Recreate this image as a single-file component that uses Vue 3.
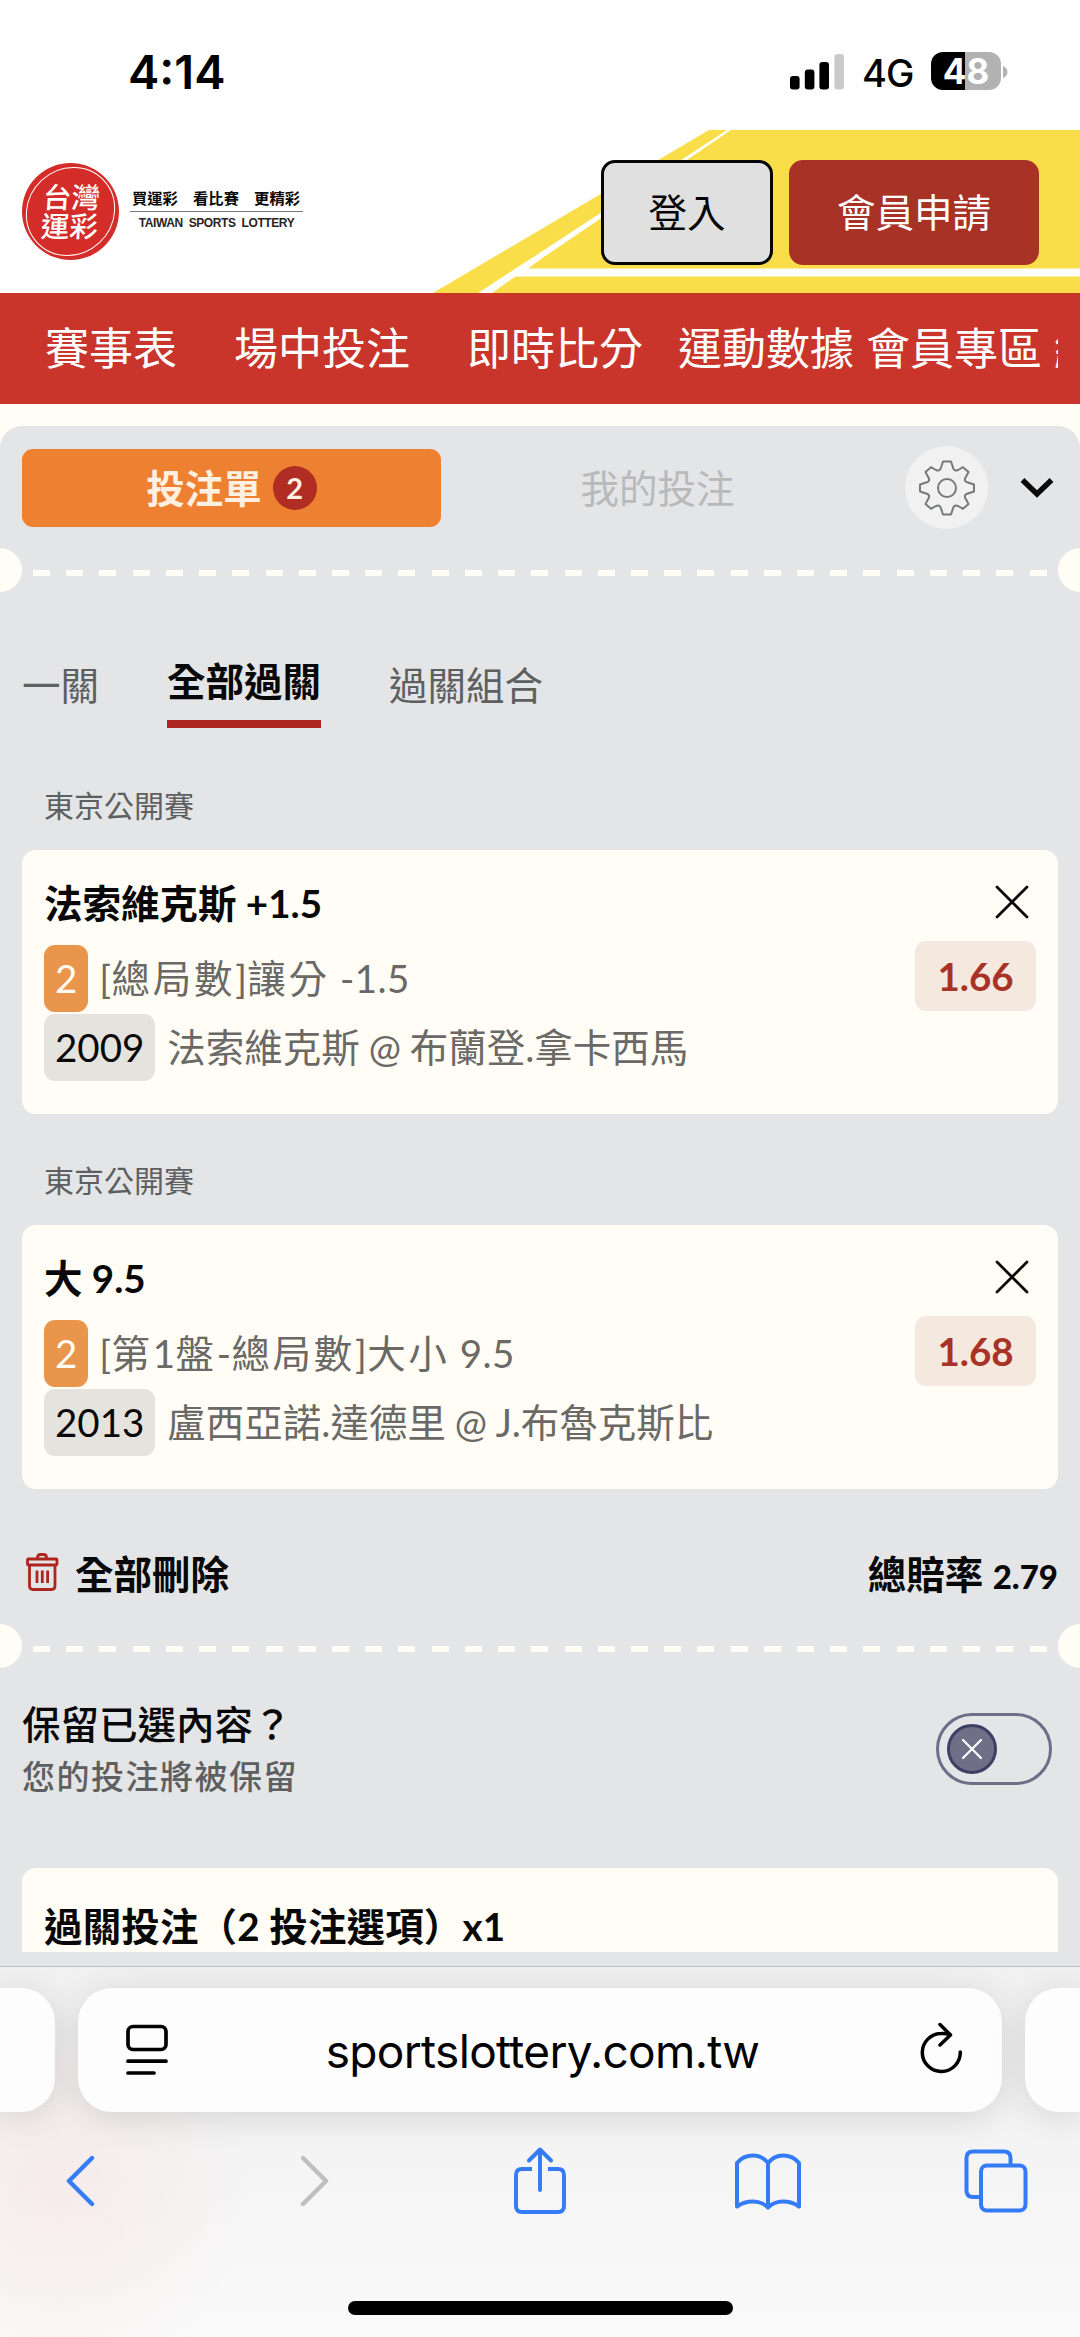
<script setup>
const navItems = [
  { label: '賽事表', gap: 57 },
  { label: '場中投注', gap: 57 },
  { label: '即時比分', gap: 35 },
  { label: '運動數據', gap: 12 },
  { label: '會員專區', gap: 12 },
  { label: '經銷商專區', gap: 0 },
]

const bets = [
  {
    league: '東京公開賽',
    pick: '法索維克斯 +1.5',
    count: '2',
    market: '[總局數]讓分 -1.5',
    code: '2009',
    match: '法索維克斯 @ 布蘭登.拿卡西馬',
    odds: '1.66',
  },
  {
    league: '東京公開賽',
    pick: '大 9.5',
    count: '2',
    market: '[第1盤-總局數]大小 9.5',
    code: '2013',
    match: '盧西亞諾.達德里 @ J.布魯克斯比',
    odds: '1.68',
  },
]

// Splits a label into runs of Han characters and runs of anything else.
const runs = (text) => text.split(/([\u4e00-\u9fff]+)/).filter(Boolean)
const isHan = (text) => /^[\u4e00-\u9fff]/.test(text)

const dashes = 31
</script>

<template>
  <div class="screen">
    <div class="status">
      <span class="time">4:14</span>
      <div class="status-right">
        <svg class="signal" width="54" height="36" viewBox="0 0 54 36">
          <rect x="0" y="22" width="9.6" height="13.5" rx="3" />
          <rect x="14.8" y="15.5" width="9.6" height="20" rx="3" />
          <rect x="29.4" y="8" width="9.6" height="27.5" rx="3" />
          <rect x="44.4" y="0" width="9.6" height="35.5" rx="3" fill="#cacaca" />
        </svg>
        <span class="net">4G</span>
        <div class="battery">48</div>
        <svg class="nub" width="5" height="12" viewBox="0 0 5 12"><path d="M0 0C6 2 6 10 0 12Z" fill="#b2b2b2" /></svg>
      </div>
    </div>

    <header class="banner">
      <svg class="banner-art" width="1080" height="163" viewBox="0 0 1080 163">
        <g fill="#f9de4a">
          <path d="M433 163L709 0H727L541 122L478 163Z" />
          <path d="M731 0H1080V138.500H528L541 129Z" />
          <path d="M515.500 146.500H1080V163H492Z" />
        </g>
      </svg>
      <div class="brand">
        <div class="seal">
          <div class="seal-ring"><span>台灣</span><span>運彩</span></div>
        </div>
        <div class="slogan">
          <div class="slogan-zh"><span>買運彩</span><span>看比賽</span><span>更精彩</span></div>
          <div class="slogan-en">TAIWAN SPORTS LOTTERY</div>
        </div>
      </div>
      <button class="btn login">登入</button>
      <button class="btn join">會員申請</button>
    </header>

    <nav class="nav">
      <span v-for="n in navItems" :key="n.label" :style="{ marginRight: n.gap + 'px' }">{{ n.label }}</span>
    </nav>

    <main class="panel">
      <div class="top-tabs">
        <div class="slip-tab"><span class="lift">投注單</span><span class="badge">2</span></div>
        <div class="mine-tab">我的投注</div>
        <div class="gear">
          <svg width="58" height="58" viewBox="-29 -29 58 58" fill="none" stroke="#77797a" stroke-width="2" stroke-linejoin="round">
            <circle r="9" />
            <path d="M-4 -26.500H4L6.500 -19Q8 -16.500 11 -18L16 -20.800L21.500 -16L18.300 -10Q17 -7 19.500 -6L27 -3.500V3.500L19.500 6Q17 7 18.300 10L21.500 16L16 20.800L11 18Q8 16.500 6.500 19L4 26.500H-4L-6.500 19Q-8 16.500 -11 18L-16 20.800L-21.500 16L-18.300 10Q-17 7 -19.500 6L-27 3.500V-3.500L-19.500 -6Q-17 -7 -18.300 -10L-21.500 -16L-16 -20.800L-11 -18Q-8 -16.500 -6.500 -19Z" />
          </svg>
        </div>
        <svg class="chev" width="34" height="22" viewBox="0 0 34 22" fill="none" stroke="#0a0a0a" stroke-width="5.500"><path d="M2.500 3L17 17L31.500 3" /></svg>
      </div>

      <div class="tear">
        <i v-for="d in dashes" :key="d" class="dash"></i>
      </div>

      <div class="modes">
        <span class="mode">一關</span>
        <span class="mode active">全部過關</span>
        <span class="mode">過關組合</span>
      </div>

      <section v-for="b in bets" :key="b.code" class="bet">
        <div class="league">{{ b.league }}</div>
        <div class="card">
          <div class="pick-row">
            <span class="pick">{{ b.pick }}</span>
            <svg width="34" height="34" viewBox="0 0 34 34" fill="none" stroke="#0a0a0a" stroke-width="2.800" stroke-linecap="round"><path d="M2 2L32 32M32 2L2 32" /></svg>
          </div>
          <div class="row">
            <span class="chip count">{{ b.count }}</span>
            <span class="market"><span v-for="(r, i) in runs(b.market)" :key="i" :class="{ han: isHan(r) }">{{ r }}</span></span>
            <span class="odds">{{ b.odds }}</span>
          </div>
          <div class="row second">
            <span class="chip code">{{ b.code }}</span>
            <span class="match">{{ b.match }}</span>
          </div>
        </div>
      </section>

      <div class="totals">
        <svg width="33" height="38" viewBox="0 0 33 38" fill="none" stroke="#ae2620" stroke-width="2.800" stroke-linejoin="round">
          <path d="M11.500 6V4.500Q11.500 1.500 14.500 1.500H17.500Q20.500 1.500 20.500 4.500V6" />
          <rect x="1.500" y="6" width="29.500" height="6" rx="1" />
          <path d="M3.500 12V33Q3.500 36.500 7 36.500H25.500Q29 36.500 29 33V12" />
          <path d="M11 17.500V30M16.300 17.500V30M21.600 17.500V30" />
        </svg>
        <span class="clear">全部刪除</span>
        <span class="total">總賠率 <b>2.79</b></span>
      </div>

      <div class="tear second-tear">
        <i v-for="d in dashes" :key="d" class="dash"></i>
      </div>

      <div class="keep">
        <div>
          <div class="keep-title">保留已選內容？</div>
          <div class="keep-sub">您的投注將被保留</div>
        </div>
        <div class="toggle">
          <div class="knob">
            <svg width="22" height="22" viewBox="0 0 22 22" fill="none" stroke="#fff" stroke-width="2.200" stroke-linecap="round"><path d="M2 2L20 20M20 2L2 20" /></svg>
          </div>
        </div>
      </div>

      <div class="parlay">過關投注（2 投注選項）x1</div>
    </main>

    <footer class="browser">
      <div class="pills">
        <div class="pill side left"></div>
        <div class="pill url">
          <svg class="page-icon" width="43" height="52" viewBox="0 0 43 52" fill="none" stroke="#000" stroke-width="3.700" stroke-linecap="round">
            <rect x="2" y="2.500" width="38" height="23" rx="5" />
            <path d="M2 37.200H40M2 49H28" />
          </svg>
          <span class="host">sportslottery.com.tw</span>
          <svg class="reload" width="44" height="54" viewBox="0 0 44 54" fill="none" stroke="#000" stroke-width="3.500" stroke-linecap="round" stroke-linejoin="round">
            <path d="M40.300 31A19 19 0 1 1 21.300 12.500Q26 12 30 14M20 3.500L30.500 14L20 24" />
          </svg>
        </div>
        <div class="pill side right"></div>
      </div>
      <div class="tools">
        <svg width="30" height="54" viewBox="0 0 30 54" fill="none" stroke="#347bf6" stroke-width="4.400" stroke-linecap="round" stroke-linejoin="round"><path d="M27 4L4 27L27 50" /></svg>
        <svg class="forward" width="30" height="54" viewBox="0 0 30 54" fill="none" stroke="#bfbfbf" stroke-width="4.400" stroke-linecap="round" stroke-linejoin="round"><path d="M3 4L26 27L3 50" /></svg>
        <svg class="share" width="54" height="68" viewBox="0 0 54 68" fill="none" stroke="#347bf6" stroke-width="3.900" stroke-linejoin="round">
          <path d="M19 22H9Q3 22 3 28V59Q3 65 9 65H45Q51 65 51 59V28Q51 22 45 22H35" />
          <path stroke-linecap="round" d="M27 43V3M16 13.500L27 2.500L38 13.500" />
        </svg>
        <svg class="book" width="68" height="60" viewBox="0 0 68 60" fill="none" stroke="#347bf6" stroke-width="4" stroke-linejoin="round">
          <path d="M34 12Q28 4.500 19 4.500Q9 4.500 3 12V55.500Q10 50.500 19 50.500Q28 50.500 34 56.500Q40 50.500 49 50.500Q58 50.500 65 55.500V12Q59 4.500 49 4.500Q40 4.500 34 12V56" />
        </svg>
        <svg class="tabs" width="64" height="64" viewBox="0 0 64 64" fill="none" stroke="#347bf6" stroke-width="4">
          <rect x="17" y="16.500" width="44.500" height="45" rx="6" />
          <path d="M17 48H9Q2.500 48 2.500 41.500V9Q2.500 2.500 9 2.500H40Q46.500 2.500 46.500 9V16" />
        </svg>
      </div>
      <div class="home"></div>
    </footer>
  </div>
</template>

<style>
body {
  margin: 0;
}
</style>

<style scoped>
* {
  box-sizing: border-box;
}
.screen {
  width: 1080px;
  height: 2337px;
  overflow: hidden;
  background: #fffdf5;
  color: #080808;
  font-family: Lato, 'Noto Sans CJK TC', sans-serif;
  font-size: 38.500px;
  display: flex;
  flex-direction: column;
  white-space: nowrap;
}
svg {
  display: block;
  flex: none;
}

/* status bar */
.status {
  height: 130px;
  flex: none;
  background: #fff;
  display: flex;
  justify-content: space-between;
  padding: 0 72px 0 128px;
  font-family: Inter, sans-serif;
  color: #000;
}
.time {
  margin-top: 42px;
  line-height: 60px;
  font-size: 47px;
  font-weight: 600;
}
.status-right {
  display: flex;
}
.signal {
  margin-top: 54px;
}
.net {
  width: 50px;
  margin: 53px 0 0 18px;
  line-height: 40px;
  font-size: 38px;
  font-weight: 500;
  letter-spacing: -1px;
}
.battery {
  width: 70px;
  height: 38px;
  margin: 52px 2px 0 19px;
  border-radius: 12px;
  background: linear-gradient(90deg, #000 34px, #b2b2b2 34px);
  color: #fff;
  font-size: 35px;
  font-weight: 700;
  line-height: 38px;
  text-align: center;
}
.nub {
  margin-top: 66px;
}

/* banner */
.banner {
  position: relative;
  height: 163px;
  flex: none;
  background: #fff;
  display: flex;
  align-items: flex-start;
  padding: 30px 41px 0 22px;
}
.banner-art {
  position: absolute;
  inset: 0;
}
.brand {
  position: relative;
  display: flex;
  flex: 1;
  padding-top: 3px;
}
.seal {
  width: 97px;
  height: 97px;
  border-radius: 50%;
  background: #d42c28;
  padding: 4px;
}
.seal-ring {
  height: 89px;
  border: 1.500px solid #fff;
  border-radius: 50%;
  color: #fff;
  font-size: 28.500px;
  font-weight: 500;
  line-height: 29px;
  display: flex;
  flex-direction: column;
  align-items: center;
  justify-content: center;
  transform: skewX(-4deg);
}
.slogan {
  width: 173px;
  margin: 26px 0 0 11px;
}
.slogan-zh {
  display: flex;
  justify-content: space-between;
  height: 23px;
  padding: 0 3px 0 2px;
  border-bottom: 1.500px solid #777;
  font-size: 15.300px;
  font-weight: 700;
  line-height: 18px;
}
.slogan-en {
  font-family: 'Liberation Sans', sans-serif;
  font-weight: 700;
  font-size: 12px;
  line-height: 23px;
  text-align: center;
  color: #2b2323;
  word-spacing: 3px;
  letter-spacing: -0.400px;
}
.btn {
  position: relative;
  height: 105px;
  margin: 0;
  padding: 0;
  border: 3px solid #a83226;
  border-radius: 14px;
  font: inherit;
  line-height: 95px;
}
.login {
  width: 172px;
  border-color: #050505;
  background: #e0e0e0;
  color: #050505;
}
.join {
  width: 250px;
  margin-left: 16px;
  background: #a83226;
  color: #fff;
}

/* navigation */
.nav {
  height: 111px;
  flex: none;
  background: #c9342b;
  color: #fff;
  font-size: 44px;
  line-height: 111px;
  display: flex;
  padding-left: 45px;
  border-right: 22px solid #c9342b;
  overflow: hidden;
}
.nav span {
  flex: none;
}

/* bet slip */
.panel {
  height: 1540px;
  flex: none;
  margin-top: 22px;
  padding: 20px 22px 0;
  background: #e4e5e7;
  border-radius: 22px 22px 0 0;
  overflow: hidden;
}
.top-tabs {
  display: flex;
  align-items: center;
  height: 83px;
}
.slip-tab {
  width: 419px;
  height: 78px;
  border-radius: 11px;
  background: #ee8131;
  color: #fff0e2;
  font-weight: 700;
  display: flex;
  align-items: center;
  justify-content: center;
}
.lift {
  padding-bottom: 4px;
}
.badge {
  width: 44px;
  height: 44px;
  margin-left: 11px;
  border-radius: 50%;
  background: #b12c22;
  font-size: 29px;
  line-height: 44px;
  text-align: center;
}
.mine-tab {
  width: 464px;
  padding: 0 31px 4px 0;
  text-align: center;
  color: #b8b9ba;
}
.gear {
  width: 83px;
  height: 83px;
  border-radius: 50%;
  background: #f1f1f1;
  display: flex;
  align-items: center;
  justify-content: center;
}
.chev {
  margin-left: 32px;
}
.tear {
  position: relative;
  display: flex;
  justify-content: space-between;
  height: 45px;
  margin: 19px -22px 0;
  padding: 22px 33px 0;
}
.tear::before,
.tear::after {
  content: '';
  position: absolute;
  top: 0;
  width: 44px;
  height: 44px;
  border-radius: 50%;
  background: #fffdf5;
}
.tear::before {
  left: -22px;
}
.tear::after {
  right: -22px;
}
.dash {
  width: 17px;
  height: 6px;
  background: #fffdf5;
}
.modes {
  display: flex;
  align-items: flex-start;
  gap: 68px;
  height: 188px;
  padding-top: 55px;
}
.mode {
  line-height: 74px;
  color: #5e5f61;
}
.mode.active {
  height: 80px;
  line-height: 66px;
  border-bottom: 8px solid #ae2620;
  color: #080808;
  font-weight: 700;
}
.league {
  height: 69px;
  padding-left: 22px;
  font-size: 30px;
  line-height: 48px;
  color: #5e5f61;
}
.bet {
  height: 362px;
}
.bet + .bet {
  margin-top: 0;
  padding-top: 13px;
  height: 375px;
}
.bet:has(+ .bet) {
  height: 362px;
}
.card {
  height: 264px;
  border-radius: 14px;
  background: #fffdf5;
  padding: 22px;
}
.pick-row {
  display: flex;
  justify-content: space-between;
  align-items: center;
  height: 60px;
  padding-right: 7px;
}
.pick {
  font-weight: 700;
  padding-bottom: 3px;
}
.row {
  display: flex;
  align-items: flex-start;
  height: 67px;
  margin-top: 13px;
  line-height: 67px;
  color: #6a6965;
}
.row.second {
  margin-top: 2px;
}
.chip {
  height: 67px;
  border-radius: 11px;
  padding: 0 11px;
}
.count {
  background: #ea954c;
  color: #fffdf5;
}
.code {
  background: #e5e3de;
  color: #080808;
}
.market {
  margin-left: 11px;
  letter-spacing: 0.400px;
  white-space: pre;
}
.han {
  letter-spacing: 2.700px;
}
.match {
  margin-left: 12px;
  word-spacing: -1px;
}
.odds {
  width: 121px;
  height: 70px;
  margin: -4px 0 0 auto;
  border-radius: 11px;
  background: #f4e8df;
  color: #a83226;
  font-weight: 700;
  line-height: 70px;
  text-align: center;
}
.totals {
  display: flex;
  align-items: center;
  height: 60px;
  margin-top: 24px;
  padding-left: 4px;
  font-weight: 700;
}
.clear {
  margin-left: 16px;
}
.total {
  margin-left: auto;
}
.total b {
  font-size: 33px;
}
.second-tear {
  margin-top: 22px;
}
.keep {
  display: flex;
  justify-content: space-between;
  padding: 27px 6px 0 0;
  height: 199px;
}
.keep-title {
  font-weight: 500;
  line-height: 57px;
}
.keep-sub {
  font-size: 33px;
  font-weight: 500;
  letter-spacing: 1.500px;
  line-height: 46px;
  color: #5e5f61;
}
.toggle {
  width: 116px;
  height: 72px;
  margin-top: 17px;
  padding: 8px;
  border: 3px solid #6f6d87;
  border-radius: 36px;
}
.knob {
  width: 50px;
  height: 50px;
  border: 3px solid #3e3f63;
  border-radius: 50%;
  background: #6f7087;
  display: flex;
  align-items: center;
  justify-content: center;
}
.parlay {
  height: 84px;
  padding-left: 22px;
  border-radius: 14px 14px 0 0;
  background: #fffdf5;
  font-weight: 700;
  letter-spacing: 0.150px;
  line-height: 117px;
}

/* browser chrome */
.browser {
  flex: 1;
  border-top: 1px solid #bdbdbf;
  background:
    radial-gradient(circle at 60px 230px, rgba(246, 220, 218, 0.4), rgba(246, 225, 220, 0) 190px),
    linear-gradient(#f1f1f1, #f4f4f4 50%, #fafafa);
  overflow: hidden;
}
.pills {
  display: flex;
  gap: 23px;
  padding-top: 21px;
}
.pill {
  height: 124px;
  background: #fdfdfd;
  box-shadow: 0 5px 36px rgba(0, 0, 0, 0.13);
}
.side {
  width: 55px;
}
.left {
  border-radius: 0 34px 34px 0;
}
.right {
  border-radius: 34px 0 0 34px;
}
.url {
  width: 924px;
  border-radius: 34px;
  display: flex;
  justify-content: space-between;
  align-items: center;
  padding: 0 38px 4px 48px;
}
.host {
  font-family: Inter, sans-serif;
  font-size: 46px;
  letter-spacing: -0.670px;
  color: #000;
  line-height: 60px;
  padding: 6px 4px 0 0;
}
.page-icon {
  margin-top: 4px;
}
.tools {
  display: flex;
  align-items: center;
  height: 70px;
  margin-top: 34px;
  padding-left: 65px;
}
.forward {
  margin-left: 205px;
}
.share {
  margin-left: 183px;
}
.book {
  margin-left: 167px;
}
.tabs {
  margin-left: 162px;
}
.home {
  width: 385px;
  height: 14px;
  margin: 85px auto 0;
  border-radius: 7px;
  background: #000;
}
</style>
